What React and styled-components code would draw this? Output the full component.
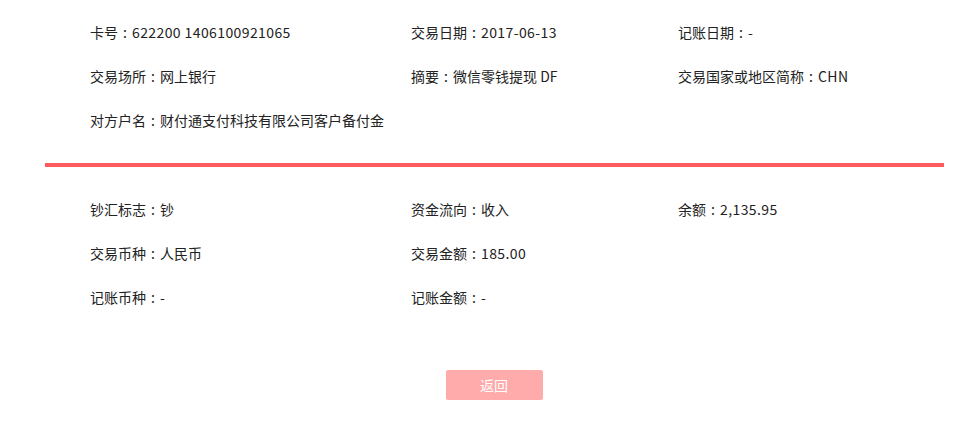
import React from 'react'
import styled, { createGlobalStyle } from 'styled-components'

const GlobalStyle = createGlobalStyle`
  body {
    margin: 0;
    background: #fff;
    font-family: "Microsoft YaHei", "Noto Sans CJK SC", "Noto Sans", sans-serif;
  }
`

const Page = styled.div`
  width: 972px;
  padding-top: 10px;
`

const Section = styled.div`
  display: grid;
  grid-template-columns: 321px 267px 1fr;
  grid-auto-rows: 44px;
  padding-left: 90px;
`

const Field = styled.div`
  display: flex;
  align-items: center;
  font-size: 14px;
  color: #222;
  white-space: nowrap;
`

const Colon = styled.span`
  display: inline-block;
  width: 14px;
  text-align: center;
`

const Value = styled.span`
  letter-spacing: ${props => (props.$latin ? '0.4px' : '0')};
`

const Divider = styled.div`
  margin: 21px 28px 20px 45px;
  height: 4px;
  background: #ff5a5f;
`

const Footer = styled.div`
  display: flex;
  justify-content: center;
  padding-top: 51px;
`

const BackButton = styled.button`
  width: 97px;
  height: 30px;
  border: none;
  border-radius: 2px;
  background: #ffaaab;
  color: #fff;
  font-family: inherit;
  font-size: 14px;
  cursor: pointer;
  margin-left: 16px;
`

const top = [
  ['卡号', '622200 1406100921065'],
  ['交易日期', '2017-06-13'],
  ['记账日期', '-'],
  ['交易场所', '网上银行'],
  ['摘要', '微信零钱提现 DF'],
  ['交易国家或地区简称', 'CHN'],
  ['对方户名', '财付通支付科技有限公司客户备付金'],
]

const bottom = [
  ['钞汇标志', '钞'],
  ['资金流向', '收入'],
  ['余额', '2,135.95'],
  ['交易币种', '人民币'],
  ['交易金额', '185.00'],
  null,
  ['记账币种', '-'],
  ['记账金额', '-'],
]

const renderFields = list =>
  list.map((item, i) =>
    item ? (
      <Field key={i}>
        {item[0]}
        <Colon>:</Colon>
        <Value $latin={/^[\x20-\x7e]+$/.test(item[1])}>{item[1]}</Value>
      </Field>
    ) : (
      <Field key={i} />
    )
  )

export default function App() {
  return (
    <Page>
      <GlobalStyle />
      <Section>{renderFields(top)}</Section>
      <Divider />
      <Section>{renderFields(bottom)}</Section>
      <Footer>
        <BackButton>返回</BackButton>
      </Footer>
    </Page>
  )
}
